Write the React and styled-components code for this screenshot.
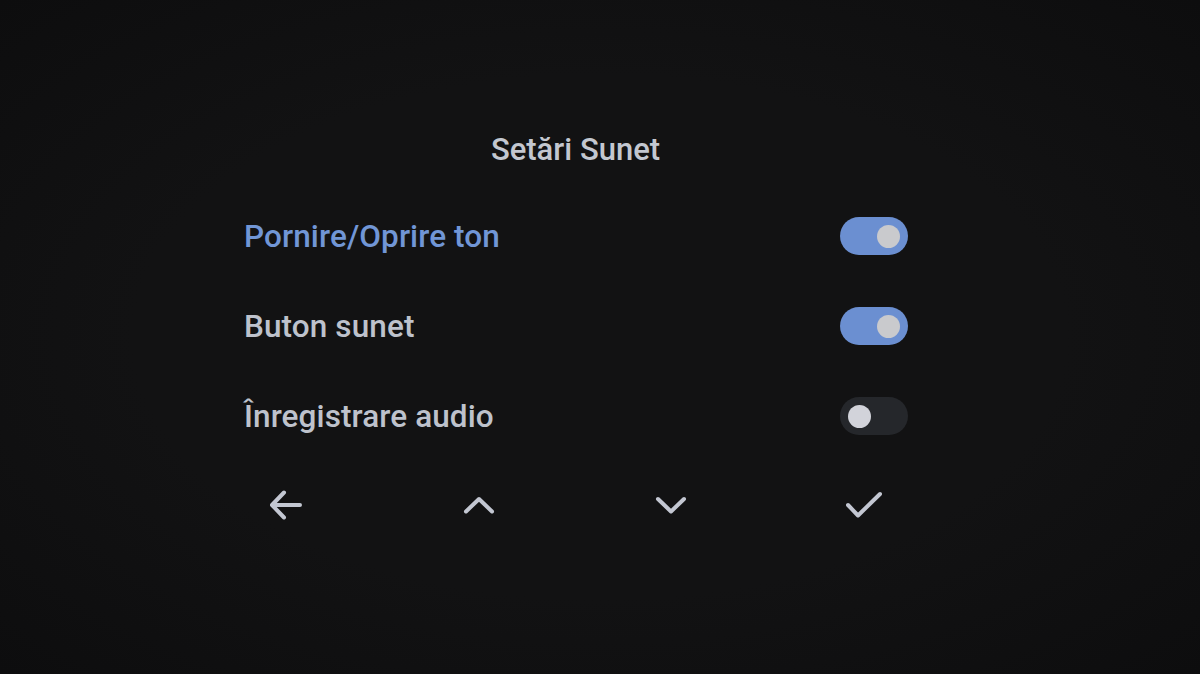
import styled, { createGlobalStyle } from "styled-components"

const GlobalStyle = createGlobalStyle`
    html, body {
        margin: 0;
        padding: 0;
        background: #111112;
    }
    #root {
        height: 674px;
    }
`

const Screen = styled.div`
    width: 1200px;
    height: 674px;
    box-sizing: border-box;
    padding: 131px 0 0 243px;
    background: radial-gradient(ellipse at 50% 50%, #121213 55%, #0d0d0e 100%);
    font-family: Roboto, "Noto Sans", sans-serif;
    overflow: hidden;
`

const Panel = styled.div`
    width: 665px;
    display: flex;
    flex-direction: column;
`

const Title = styled.h1`
    margin: 0 0 22px;
    text-align: center;
    font-size: 31px;
    line-height: 38px;
    font-weight: 500;
    color: #c3c7d0;
`

const Row = styled.div`
    height: 90px;
    display: flex;
    align-items: center;
    justify-content: space-between;
    padding-left: 1px;
`

const Label = styled.span`
    font-size: 31.5px;
    font-weight: 500;
    letter-spacing: 0.1px;
    color: ${props => props.active ? "#7196d6" : "#bec2cc"};
`

const Track = styled.div`
    width: 68px;
    height: 38px;
    border-radius: 19px;
    box-sizing: border-box;
    padding: 0 8px;
    display: flex;
    align-items: center;
    justify-content: ${props => props.on ? "flex-end" : "flex-start"};
    background: ${props => props.on ? "#6b8fd1" : "#25272b"};
`

const Thumb = styled.div`
    width: 23px;
    height: 23px;
    border-radius: 50%;
    background: ${props => props.on ? "#c9cacd" : "#d2d3da"};
`

const Nav = styled.div`
    margin-top: 24px;
    height: 40px;
    display: flex;
    align-items: center;
    justify-content: space-between;
    padding: 0 26px 0 25px;
`

const NavButton = styled.div`
    width: 36px;
    height: 36px;
    display: flex;
    align-items: center;
    justify-content: center;
    color: #c3c7d2;
`

const Toggle = ({ on }) => (
    <Track on={on}>
        <Thumb on={on} />
    </Track>
)

const Icon = ({ d }) => (
    <svg width="36" height="36" viewBox="0 0 36 36" fill="none" stroke="currentColor" strokeWidth="4" strokeLinecap="round" strokeLinejoin="round">
        <path d={d} />
    </svg>
)

const settings = [
    { label: "Pornire/Oprire ton", on: true, active: true },
    { label: "Buton sunet", on: true },
    { label: "Înregistrare audio", on: false },
]

const App = () => {
    return (
        <Screen>
            <GlobalStyle />
            <Panel>
                <Title>Setări Sunet</Title>
                {settings.map(s => (
                    <Row key={s.label}>
                        <Label active={s.active}>{s.label}</Label>
                        <Toggle on={s.on} />
                    </Row>
                ))}
                <Nav>
                    <NavButton><Icon d="M32 18H5M16 5.5L4 18l12 12.5" /></NavButton>
                    <NavButton><Icon d="M5 24.5L18 12l13 12.5" /></NavButton>
                    <NavButton><Icon d="M5 12l13 12.5L31 12" /></NavButton>
                    <NavButton><Icon d="M2 18l10 10.5L34 7" /></NavButton>
                </Nav>
            </Panel>
        </Screen>
    )
}

export default App
